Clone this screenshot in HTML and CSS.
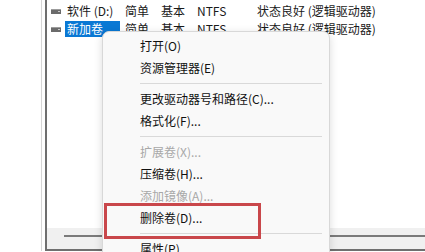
FILE: index.html
```html
<!DOCTYPE html>
<html lang="zh-CN">
<head>
    <meta charset="UTF-8">
    <title>磁盘管理</title>
    <link rel="stylesheet" href="styles.css">
</head>
<body>
    <div class="frame">
        <div class="pane">
            <div class="volume-list">
                <div class="row">
                    <span class="drive-icon"><svg width="10" height="5" viewBox="0 0 10 5"><rect x="0" y="0" width="10" height="5" fill="#6b6b6b"/><rect x="0" y="0" width="10" height="1" fill="#9c9c9c"/><rect x="7" y="2" width="2" height="1" fill="#c8c8c8"/></svg></span>
                    <span class="name"><span class="label">软件 (D:)</span></span>
                    <span>简单</span>
                    <span>基本</span>
                    <span>NTFS</span>
                    <span>状态良好 (逻辑驱动器)</span>
                </div>
                <div class="row selected">
                    <span class="drive-icon"><svg width="10" height="5" viewBox="0 0 10 5"><rect x="0" y="0" width="10" height="5" fill="#6b6b6b"/><rect x="0" y="0" width="10" height="1" fill="#9c9c9c"/><rect x="7" y="2" width="2" height="1" fill="#c8c8c8"/></svg></span>
                    <span class="name"><span class="label">新加卷</span></span>
                    <span>简单</span>
                    <span>基本</span>
                    <span>NTFS</span>
                    <span>状态良好 (逻辑驱动器)</span>
                </div>
            </div>
            <div class="hscroll">
                <div class="hscroll-bar"></div>
            </div>
        </div>
    </div>

    <!-- context menu -->
    <div class="context-menu">
        <div class="menu-item">打开(O)</div>
        <div class="menu-item">资源管理器(E)</div>
        <div class="menu-sep"></div>
        <div class="menu-item">更改驱动器号和路径(C)...</div>
        <div class="menu-item">格式化(F)...</div>
        <div class="menu-sep"></div>
        <div class="menu-item disabled">扩展卷(X)...</div>
        <div class="menu-item">压缩卷(H)...</div>
        <div class="menu-item disabled">添加镜像(A)...</div>
        <div class="menu-item">删除卷(D)...</div>
        <div class="menu-sep"></div>
        <div class="menu-item">属性(P)</div>
    </div>

    <!-- annotation box -->
    <div class="highlight-box"></div>
</body>
</html>
```

FILE: styles.css
```css
body {
    margin: 0;
    width: 425px;
    height: 252px;
    overflow: hidden;
    background-color: #fff;
    font-family: "Noto Sans CJK SC", "Noto Sans", sans-serif;
    font-size: 12px;
    color: #1a1a1a;
    position: relative;
}

.frame {
    margin-left: 41px;
    border-left: 1px solid #d6d6d6;
    padding-left: 3px;
}

.pane {
    height: 249px;
    display: flex;
    flex-direction: column;
    border-left: 2px solid #6f6f6f;
    border-bottom: 2px solid #6f6f6f;
}

.volume-list {
    height: 225px;
    padding-top: 3px;
    padding-left: 4px;
    background-color: #fff;
}

.row {
    display: grid;
    grid-template-columns: 14px 60px 36px 36px 60px auto;
    height: 18px;
    line-height: 16px;
    white-space: nowrap;
}

.drive-icon {
    display: flex;
    align-items: center;
    height: 18px;
    margin-top: -1px;
}

.name .label {
    display: block;
    height: 16px;
    padding-left: 2px;
    width: 53px;
}

.selected .name .label {
    background-color: #0a78d4;
    color: #fff;
}

.hscroll {
    flex: 1;
    background-color: #f0f0f0;
    padding-top: 7px;
}

.hscroll-bar {
    height: 2px;
    margin-left: 17px;
    background-color: #7a7a7a;
}

/* context menu */
.context-menu {
    position: absolute;
    left: 102px;
    top: 31px;
    width: 226px;
    height: 240px;
    padding-top: 3px;
    background-color: #f9f9f9;
    border: 1px solid #d8d8d8;
    border-radius: 7px;
    box-shadow: 0 2px 8px rgba(0, 0, 0, 0.14);
}

.menu-item {
    height: 22px;
    line-height: 22px;
    padding-left: 37px;
    color: #111;
    white-space: nowrap;
}

.menu-item.disabled {
    color: #a8a8a8;
}

.menu-sep {
    height: 1px;
    margin: 4px 7px 4px 37px;
    background-color: #d9d9d9;
}

.highlight-box {
    position: absolute;
    left: 104px;
    top: 203px;
    width: 157px;
    height: 36px;
    box-sizing: border-box;
    border: 3px solid #c9474b;
}
```
